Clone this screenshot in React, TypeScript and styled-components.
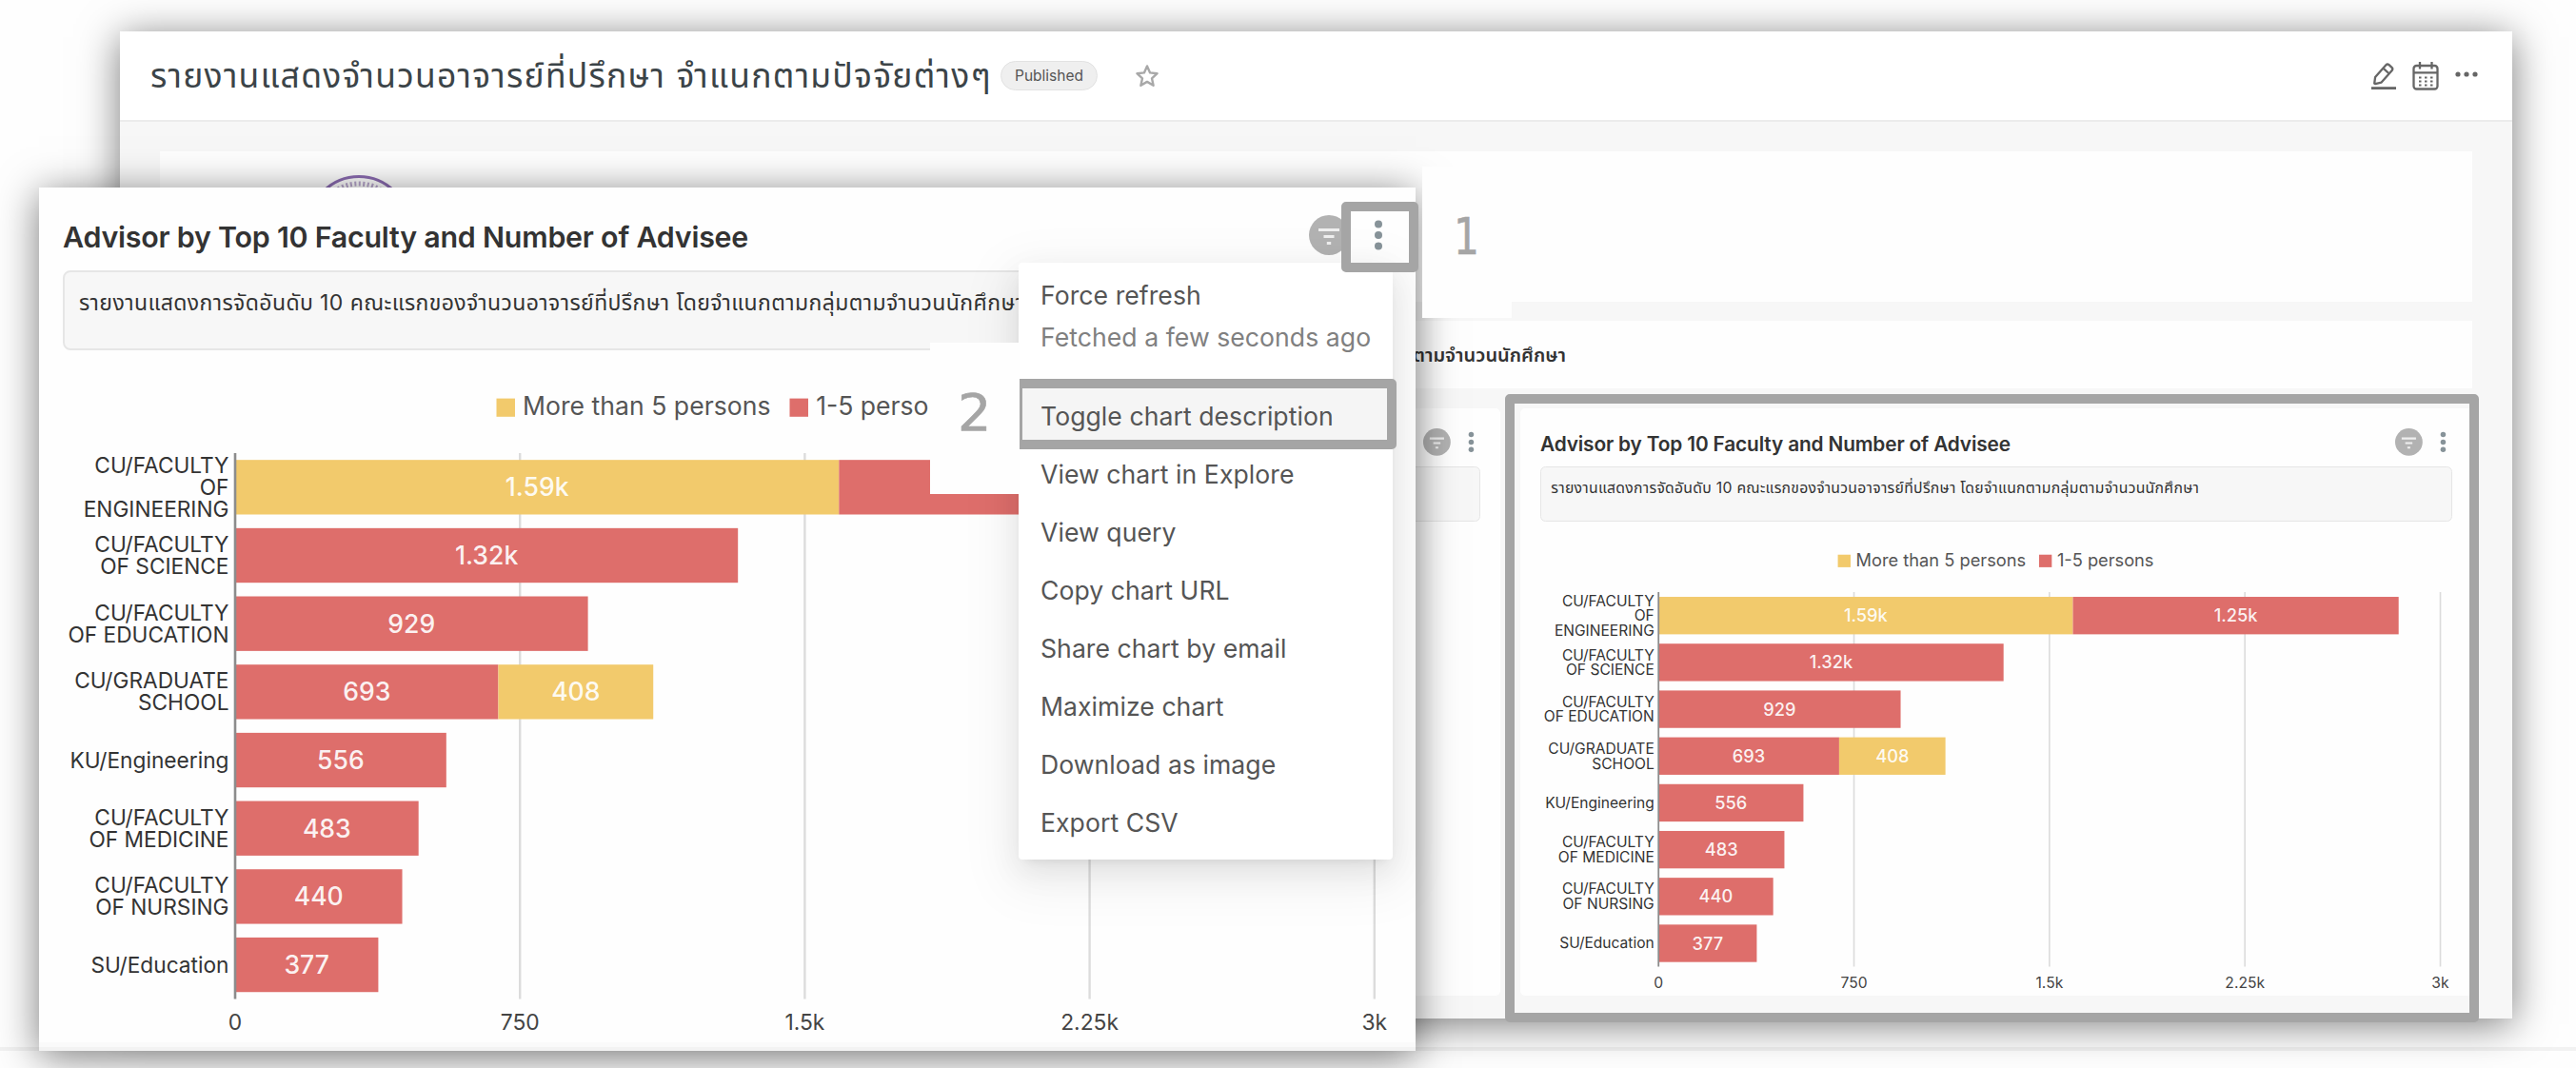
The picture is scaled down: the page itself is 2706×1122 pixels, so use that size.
import React from "react";
import styled, { createGlobalStyle } from "styled-components";

const GlobalStyle = createGlobalStyle`
  *, *::before, *::after { box-sizing: border-box; }
  html, body { margin: 0; padding: 0; background: #fefefe; }
  body { overflow: hidden; font-family: Inter, "Noto Sans", "Noto Sans Thai", sans-serif; color: #333; }
`;

const RED = "#de6e6b";
const YELLOW = "#f2ca6c";
const MARK = "#a5a5a5";

/* ---------- canvas ---------- */

const Canvas = styled.div`
  position: relative;
  width: 2706px;
  height: 1122px;
  overflow: hidden;
  background: #fefefe;
`;

const FooterRule = styled.div`
  position: absolute;
  left: 0;
  right: 0;
  top: 1100px;
  height: 4px;
  background: #f2f2f2;
`;

const floating = `0 6px 40px rgba(0, 0, 0, 0.52)`;

const DashboardWindow = styled.section`
  position: absolute;
  left: 126px;
  top: 33px;
  width: 2513px;
  height: 1037px;
  display: flex;
  flex-direction: column;
  background: #f7f7f7;
  box-shadow: ${floating};
`;

const Zoomed = styled.section`
  position: absolute;
  left: 41px;
  top: 197px;
  width: 1446px;
  height: 907px;
  padding: 27px 25px 0;
  background: #fefefe;
  box-shadow: ${floating};
  display: flex;
  flex-direction: column;
`;

const ZoomedFoot = styled.div`
  margin: auto -25px 0;
  height: 9px;
  background: #fafafa;
  border-bottom: 4px solid #f3f3f3;
`;

/* ---------- dashboard header ---------- */

const Header = styled.header`
  flex: none;
  height: 95px;
  display: flex;
  align-items: center;
  padding: 0 35px 0 32px;
  background: #fff;
  border-bottom: 2px solid #ececec;
`;

const DashboardTitle = styled.h1`
  margin: 0;
  width: 882px;
  font-weight: 400;
  font-size: 35.5px;
  letter-spacing: 1.25px;
  line-height: 50px;
  white-space: nowrap;
  color: #3c4448;
`;

const Badge = styled.span`
  margin-left: 11px;
  width: 102px;
  height: 31px;
  border: 1px solid #e2e2e2;
  border-radius: 16px;
  background: #efefef;
  display: flex;
  align-items: center;
  justify-content: center;
  font-size: 15.5px;
  color: #555;
`;

const StarSlot = styled.span`
  display: flex;
  margin-left: 39px;
`;

const Actions = styled.div`
  margin-left: auto;
  display: flex;
  align-items: center;
  gap: 16px;
  color: #666;
  svg { display: block; }
`;

/* ---------- dashboard body ---------- */

const Body = styled.div`
  flex: 1;
  display: flex;
  flex-direction: column;
  padding: 31px 42px 24px;
`;

const Banner = styled.div`
  height: 158px;
  background: #fefefe;
  padding: 24px 0 0 154px;
  overflow: hidden;
`;

const SectionTitle = styled.div`
  margin-top: 20px;
  height: 71px;
  background: #fefefe;
  display: flex;
  align-items: center;
  justify-content: flex-end;
  padding: 2px 952px 0 0;
  font-size: 20px;
  font-weight: 600;
  white-space: nowrap;
  color: #333;
`;

const Columns = styled.div`
  margin-top: 21px;
  flex: 1;
  display: grid;
  grid-template-columns: 387px 1000px 1000px;
  gap: 21px;
`;

const ChartCell = styled.article`
  background: #fefefe;
  border-radius: 5px;
  padding: 20px 21px 0;
  overflow: hidden;
`;

/* ---------- chart slice ---------- */

const SliceHead = styled.div<{ $k: number }>`
  display: flex;
  align-items: center;
  height: ${(p) => 46 * p.$k}px;
  margin-bottom: ${(p) => 14 * p.$k}px;
`;

const SliceTitle = styled.h2<{ $k: number }>`
  margin: 0;
  padding-top: ${(p) => 5 * p.$k}px;
  font-size: ${(p) => 30.4 * p.$k}px;
  letter-spacing: ${(p) => -0.23 * p.$k}px;
  line-height: 1.2;
  font-weight: 600;
  white-space: nowrap;
  color: #333;
`;

const SliceTools = styled.div<{ $k: number }>`
  margin-left: auto;
  margin-right: ${(p) => 9 * p.$k}px;
  display: flex;
  align-items: center;
  gap: ${(p) => 26 * p.$k}px;
  svg { display: block; }
`;

const Description = styled.p<{ $k: number }>`
  margin: 0;
  height: ${(p) => 84 * p.$k}px;
  padding: ${(p) => 14.5 * p.$k}px ${(p) => 15 * p.$k}px;
  border: ${(p) => 2 * p.$k}px solid #e6e6e6;
  border-radius: ${(p) => 8 * p.$k}px;
  background: #f7f7f7;
  font-size: ${(p) => 23 * p.$k}px;
  letter-spacing: ${(p) => 0.4 * p.$k}px;
  line-height: ${(p) => 34 * p.$k}px;
  white-space: nowrap;
  overflow: hidden;
  color: #333;
`;

const ChartSvg = styled.svg`
  display: block;
  width: 100%;
  height: auto;
  font-family: Inter, sans-serif;
`;

/* ---------- menu and annotations ---------- */

const Menu = styled.ul`
  position: absolute;
  left: 1070px;
  top: 276px;
  width: 393px;
  height: 627px;
  margin: 0;
  padding: 8px 0;
  list-style: none;
  background: #fff;
  border-radius: 4px;
  box-shadow: 0 6px 12px -8px rgba(0, 0, 0, 0.12), 0 12px 32px rgba(0, 0, 0, 0.08),
    0 17px 54px 15px rgba(0, 0, 0, 0.05);
`;

const MenuItem = styled.li<{ $active?: boolean }>`
  height: 61px;
  padding-left: 23px;
  display: flex;
  align-items: center;
  font-size: 26.6px;
  letter-spacing: 0.05px;
  white-space: nowrap;
  color: #555;
  background: ${(p) => (p.$active ? "#f5f5f5" : "transparent")};
`;

const RefreshItem = styled.li`
  height: 122px;
  padding: 4px 0 0 23px;
  font-size: 26.6px;
  letter-spacing: 0.05px;
  line-height: 44px;
  white-space: nowrap;
  color: #555;
`;

const RefreshTime = styled.div`
  color: #808080;
`;

const Frame = styled.div<{ $x: number; $y: number; $w: number; $h: number }>`
  position: absolute;
  left: ${(p) => p.$x}px;
  top: ${(p) => p.$y}px;
  width: ${(p) => p.$w}px;
  height: ${(p) => p.$h}px;
  border: 10px solid ${MARK};
  border-radius: 5px;
`;

const StepNote = styled.div<{ $x: number; $y: number; $dx: number; $sx: number }>`
  position: absolute;
  left: ${(p) => p.$x}px;
  top: ${(p) => p.$y}px;
  width: 94px;
  height: 159px;
  padding: 42px 0 0 ${(p) => p.$dx}px;
  background: #fefefe;
  font-family: "DejaVu Sans", sans-serif;
  font-size: 53px;
  line-height: 64px;
  color: ${MARK};
  -webkit-text-stroke: 0.6px ${MARK};
  span { display: inline-block; transform: scaleX(${(p) => p.$sx}); transform-origin: left; }
`;

/* ---------- icons ---------- */

const StarIcon = () => (
  <svg width="26" height="26" viewBox="0 0 26 26" fill="none" stroke="#a8a8a8" strokeWidth="2.4">
    <path d="M13 2.4l3.1 7 7.5.8-5.6 5.1 1.6 7.5-6.6-3.9-6.6 3.9L8 15.3 2.4 10.200l7.500-.8z" strokeLinejoin="round" />
  </svg>
);

const EditIcon = () => (
  <svg width="28" height="30" viewBox="0 0 28 30" fill="none" stroke="currentColor" strokeWidth="2.3">
    <path d="M4.200 22.600l.9-6.600L16.400 3.200q1.500-1.500 3.200 0l2.900 2.700q1.500 1.500.2 3.200L11.400 21.700l-6.200 1.500z" strokeLinejoin="round" />
    <path d="M13.700 6.800l5.600 5.200" />
    <path d="M1 27.600h26" strokeWidth="2.800" />
  </svg>
);

const CalendarIcon = () => (
  <svg width="28" height="31" viewBox="0 0 28 31" fill="none" stroke="currentColor" strokeWidth="2.300">
    <rect x="1.500" y="5" width="25" height="24.500" rx="3" />
    <path d="M1.500 12.300h25M8 1v7.500M20.500 1v7.500" />
    <path d="M7 17.500h2.500M13 17.500h2.500M19 17.500h2.500M7 21.500h2.500M13 21.500h2.500M19 21.500h2.500M7 25.500h2.500M13 25.500h2.500M19 25.500h2.500" strokeWidth="2" />
  </svg>
);

const MoreIcon = () => (
  <svg width="26" height="30" viewBox="0 0 26 30" fill="currentColor">
    <circle cx="4" cy="13" r="2.600" />
    <circle cx="13" cy="13" r="2.600" />
    <circle cx="22" cy="13" r="2.600" />
  </svg>
);

const FilterBadge = ({ k }: { k: number }) => (
  <svg width={42 * k} height={42 * k} viewBox="0 0 42 42">
    <circle cx="21" cy="21" r="21" fill="#b2b2b2" />
    <path d="M10 15.500h22M15.500 22.500h11M18.800 29.500h4.400" stroke="#efefef" strokeWidth="3" />
  </svg>
);

const KebabIcon = ({ k }: { k: number }) => (
  <svg width={10 * k} height={42 * k} viewBox="0 0 10 42" fill="#879399">
    <circle cx="5" cy="9.500" r="4" />
    <circle cx="5" cy="21" r="4" />
    <circle cx="5" cy="32.500" r="4" />
  </svg>
);

const Seal = () => (
  <svg width="110" height="110" viewBox="0 0 110 110" fill="none">
    <circle cx="55" cy="55" r="52.500" stroke="#8a6bb0" strokeWidth="3" />
    <circle cx="55" cy="55" r="45" stroke="#b7a6cc" strokeWidth="5" strokeDasharray="2 2.500" />
    <circle cx="55" cy="55" r="40" stroke="#8a6bb0" strokeWidth="1.500" />
  </svg>
);

/* ---------- chart ---------- */

type Segment = { value: number; label: string; color: string };
type Row = { name: string[]; segments: Segment[] };

const rows: Row[] = [
  { name: ["CU/FACULTY", "OF", "ENGINEERING"], segments: [{ value: 1590, label: "1.59k", color: YELLOW }, { value: 1250, label: "1.25k", color: RED }] },
  { name: ["CU/FACULTY", "OF SCIENCE"], segments: [{ value: 1324, label: "1.32k", color: RED }] },
  { name: ["CU/FACULTY", "OF EDUCATION"], segments: [{ value: 929, label: "929", color: RED }] },
  { name: ["CU/GRADUATE", "SCHOOL"], segments: [{ value: 693, label: "693", color: RED }, { value: 408, label: "408", color: YELLOW }] },
  { name: ["KU/Engineering"], segments: [{ value: 556, label: "556", color: RED }] },
  { name: ["CU/FACULTY", "OF MEDICINE"], segments: [{ value: 483, label: "483", color: RED }] },
  { name: ["CU/FACULTY", "OF NURSING"], segments: [{ value: 440, label: "440", color: RED }] },
  { name: ["SU/Education"], segments: [{ value: 377, label: "377", color: RED }] },
];

const ticks = ["0", "750", "1.5k", "2.25k", "3k"];

const X0 = 181;
const TOP = 108;
const BOTTOM = 681.4;
const TICK = 299.2;
const BAND = (BOTTOM - TOP) / rows.length;

const AdvisorChart = () => (
  <ChartSvg viewBox="0 0 1396 725">
    <rect x="455.500" y="50.600" width="19.500" height="19.200" fill={YELLOW} />
    <text x="483" y="68" fontSize="26.600" fill="#555" textLength="260.500">More than 5 persons</text>
    <rect x="763.500" y="50.600" width="19.500" height="19.200" fill={RED} />
    <text x="791.200" y="68" fontSize="26.600" fill="#555" textLength="148">1-5 persons</text>

    {ticks.map((t, i) => (
      <g key={t}>
        {i > 0 && <line x1={X0 + i * TICK} x2={X0 + i * TICK} y1={TOP} y2={BOTTOM} stroke="#dcdcdc" strokeWidth="2.400" />}
        <text x={X0 + i * TICK} y="714" fontSize="22.800" fill="#444" textAnchor="middle">{t}</text>
      </g>
    ))}

    {rows.map((row, r) => {
      const mid = TOP + BAND * (r + 0.5);
      let start = 0;
      return (
        <g key={r}>
          {row.name.map((line, j) => (
            <text key={line} x="174.500" y={mid + 8 + (j - (row.name.length - 1) / 2) * 22.800} fontSize="22.700" fill="#333" textAnchor="end">
              {line}
            </text>
          ))}
          {row.segments.map((s) => {
            const x = X0 + (start / 750) * TICK;
            const w = (s.value / 750) * TICK;
            start += s.value;
            return (
              <g key={s.label}>
                <rect x={x} y={mid - BAND * 0.4} width={w} height={BAND * 0.8} fill={s.color} />
                <text x={x + w / 2} y={mid + 9.600} fontSize="26.600" fontWeight="500" fill="#fff" fillOpacity="0.92" textAnchor="middle">{s.label}</text>
              </g>
            );
          })}
        </g>
      );
    })}
    <line x1={X0} x2={X0} y1={TOP} y2={BOTTOM} stroke="#8c8c8c" strokeWidth="2.600" />
  </ChartSvg>
);

const AdvisorSlice = ({ k }: { k: number }) => (
  <>
    <SliceHead $k={k}>
      <SliceTitle $k={k}>Advisor by Top 10 Faculty and Number of Advisee</SliceTitle>
      <SliceTools $k={k}>
        <FilterBadge k={k} />
        <KebabIcon k={k} />
      </SliceTools>
    </SliceHead>
    <Description $k={k}>
      รายงานแสดงการจัดอันดับ 10 คณะแรกของจำนวนอาจารย์ที่ปรึกษา โดยจำแนกตามกลุ่มตามจำนวนนักศึกษา
    </Description>
    <AdvisorChart />
  </>
);

const actions = [
  "View chart in Explore",
  "View query",
  "Copy chart URL",
  "Share chart by email",
  "Maximize chart",
  "Download as image",
  "Export CSV",
];

const SMALL = 0.686;

export default function App() {
  return (
    <Canvas>
      <GlobalStyle />
      <FooterRule />

      <DashboardWindow>
        <Header>
          <DashboardTitle>รายงานแสดงจำนวนอาจารย์ที่ปรึกษา จำแนกตามปัจจัยต่างๆ</DashboardTitle>
          <Badge>Published</Badge>
          <StarSlot><StarIcon /></StarSlot>
          <Actions>
            <EditIcon />
            <CalendarIcon />
            <MoreIcon />
          </Actions>
        </Header>
        <Body>
          <Banner><Seal /></Banner>
          <SectionTitle>ตามจำนวนนักศึกษา</SectionTitle>
          <Columns>
            <ChartCell />
            <ChartCell>
              <SliceHead $k={SMALL}>
                <SliceTools $k={SMALL}>
                  <FilterBadge k={SMALL} />
                  <KebabIcon k={SMALL} />
                </SliceTools>
              </SliceHead>
              <Description $k={SMALL} />
            </ChartCell>
            <ChartCell>
              <AdvisorSlice k={SMALL} />
            </ChartCell>
          </Columns>
        </Body>
      </DashboardWindow>
      <Frame $x={1581} $y={414} $w={1023} $h={660} />

      <Zoomed>
        <AdvisorSlice k={1} />
        <ZoomedFoot />
      </Zoomed>

      <Menu>
        <RefreshItem>
          Force refresh
          <RefreshTime>Fetched a few seconds ago</RefreshTime>
        </RefreshItem>
        <MenuItem $active>Toggle chart description</MenuItem>
        {actions.map((a) => (
          <MenuItem key={a}>{a}</MenuItem>
        ))}
      </Menu>

      <Frame $x={1409} $y={212} $w={81} $h={74} />
      <Frame $x={1064} $y={398} $w={403} $h={74} />
      <StepNote $x={1494} $y={175} $dx={33} $sx={0.8}><span>1</span></StepNote>
      <StepNote $x={977} $y={360} $dx={29} $sx={1.05}><span>2</span></StepNote>
    </Canvas>
  );
}
